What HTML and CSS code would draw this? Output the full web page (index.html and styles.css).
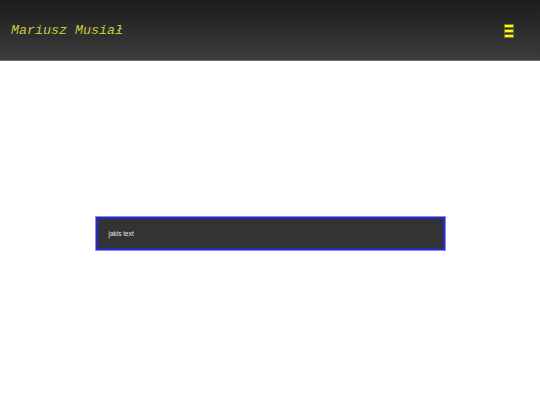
FILE: index.html
```html
<!DOCTYPE html>
<html>
<head>
<meta charset="utf-8">
<link rel="stylesheet" href="styles.css">
</head>
<body>
<header class="top">
  <div class="title">Mariusz Musiał</div>
  <div class="menu" aria-label="menu">
    <span class="bar"></span><span class="bar"></span><span class="bar"></span>
  </div>
</header>
<main class="main">
  <div class="box">jakis text</div>
</main>
</body>
</html>
```
FILE: styles.css
```css
html, body {
  margin: 0;
  padding: 0;
  height: 100%;
  background: #fff;
}
body {
  display: flex;
  flex-direction: column;
}
.top {
  height: 60px;
  flex: none;
  background: linear-gradient(to bottom, #1c1c1c, #3c3c3c);
  border-bottom: 1px solid #6e6e6e;
  display: flex;
  align-items: center;
  justify-content: space-between;
  padding: 0 26px 0 11px;
}
.title {
  font-family: "Courier New", "Liberation Mono", monospace;
  font-style: italic;
  font-size: 13.33px;
  color: #c8c83a;
  margin-top: 1px;
}
.menu {
  display: flex;
  flex-direction: column;
  gap: 1px;
  margin-top: 1px;
}
.bar {
  display: block;
  width: 8px;
  height: 2px;
  background: #f4f432;
  border: 1px solid #7a7a10;
  border-width: 0.5px 1px;
}
.main {
  flex: 1;
  display: flex;
  align-items: center;
  justify-content: center;
}
.box {
  width: 349px;
  height: 33px;
  box-sizing: border-box;
  background: #333;
  border: 2px solid #2a2ab8;
  box-shadow: 0 0 0 1px #8a8af0;
  display: flex;
  align-items: center;
  padding: 0 11px;
  font-family: "Liberation Sans", Arial, sans-serif;
  font-size: 6.5px;
  color: #e8e8e8;
}
```
